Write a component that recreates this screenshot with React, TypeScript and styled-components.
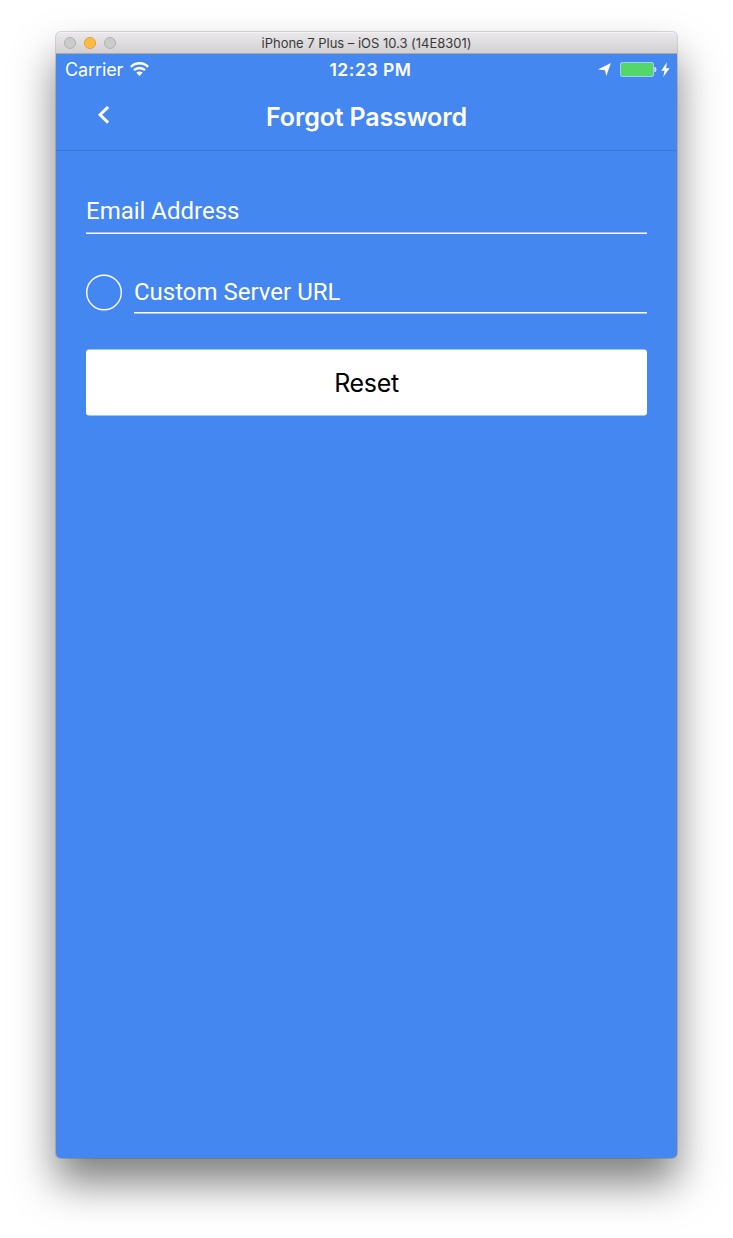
import React from 'react';
import styled, { createGlobalStyle } from 'styled-components';

const GlobalStyle = createGlobalStyle`
  *, *::before, *::after { box-sizing: border-box; }
  body { margin: 0; background: #fff; }
`;

const blue = '#4487f0';
const system = `Inter, 'Liberation Sans', sans-serif`;

const Page = styled.div`
  width: 733px;
  height: 1238px;
  padding: 32px 56px 80px;
  overflow: hidden;
  background: #fff;
`;

const Window = styled.div`
  display: flex;
  flex-direction: column;
  width: 621px;
  height: 1126px;
  border-radius: 5px;
  background: ${blue};
  color: #fff;
  font-family: ${system};
  box-shadow: 0 0 0 1px rgba(0, 0, 0, 0.14), 0 25px 42px rgba(0, 0, 0, 0.5);
`;

const TitleBar = styled.div`
  display: grid;
  grid-template-columns: 100px 1fr 100px;
  align-items: center;
  height: 22px;
  flex: none;
  border-radius: 5px 5px 0 0;
  border-bottom: 1px solid #a9a9ae;
  background: linear-gradient(#ebe9eb, #d2d0d2);
  box-shadow: inset 0 1px 0 #f4f3f4;
`;

const Lights = styled.div`
  display: flex;
  gap: 8px;
  padding-left: 8px;
`;

const Light = styled.span<{ $on?: boolean }>`
  width: 12px;
  height: 12px;
  border-radius: 50%;
  background: ${(p) => (p.$on ? '#fdbc40' : '#cdcccd')};
  border: 1px solid ${(p) => (p.$on ? '#e0a03a' : '#b3b2b3')};
`;

const WindowTitle = styled.div`
  text-align: center;
  font-size: 13px;
  line-height: 20px;
  letter-spacing: -0.02px;
  white-space: nowrap;
  color: #3a393a;
`;

const StatusBar = styled.div`
  display: grid;
  grid-template-columns: 1fr auto 1fr;
  align-items: center;
  height: 32px;
  flex: none;
  padding: 0 7px 0 9px;
`;

const Carrier = styled.div`
  display: flex;
  align-items: center;
  gap: 7px;
  font-size: 18px;
  letter-spacing: -0.1px;
  line-height: 22px;
`;

const Clock = styled.div`
  font-size: 17.5px;
  font-weight: 600;
  line-height: 22px;
  letter-spacing: 0.55px;
  padding-left: 6px;
`;

const Indicators = styled.div`
  display: flex;
  align-items: center;
  justify-content: flex-end;
`;

const Header = styled.header`
  display: grid;
  grid-template-columns: 96px 1fr 96px;
  height: 65px;
  flex: none;
  border-bottom: 1px solid #3a75d3;
`;

const BackButton = styled.button`
  display: flex;
  align-items: flex-start;
  padding: 20px 0 0 42px;
  border: 0;
  background: none;
`;

const Heading = styled.h1`
  margin: 0;
  padding-top: 15px;
  text-align: center;
  font-size: 25px;
  font-weight: 600;
  line-height: 32px;
  letter-spacing: -0.15px;
  white-space: nowrap;
`;

const Form = styled.form`
  display: flex;
  flex-direction: column;
  padding: 40px 30px 0;
`;

const Field = styled.label<{ $rule: string }>`
  flex: 1;
  display: block;
  font-family: Roboto, sans-serif;
  font-size: 24px;
  line-height: 40px;
  background: ${(p) => p.$rule} bottom / 100% 2px no-repeat;
`;

const EmailField = styled(Field)`
  flex: none;
  height: 43px;
`;

const ServerRow = styled.div`
  display: flex;
  gap: 12px;
  height: 42px;
  margin-top: 38px;
`;

const Radio = styled.span`
  width: 36px;
  height: 37px;
  margin-top: 2px;
`;

const Reset = styled.button`
  height: 67px;
  margin-top: 35px;
  padding: 1px 0 0;
  border: 0;
  border-radius: 4px;
  background: linear-gradient(#a1c3f7 1px, #fff 1px, #fff 66px, #a1c3f7 66px);
  font-family: ${system};
  font-size: 25px;
  letter-spacing: -0.35px;
  color: #000;
`;

export default function App() {
  return (
    <Page>
      <GlobalStyle />
      <Window>
        <TitleBar>
          <Lights>
            <Light />
            <Light $on />
            <Light />
          </Lights>
          <WindowTitle>iPhone 7 Plus – iOS 10.3 (14E8301)</WindowTitle>
        </TitleBar>
        <StatusBar>
          <Carrier>
            <span>Carrier</span>
            <svg width="19" height="16" viewBox="0 0 19 16" fill="none" stroke="#fff" strokeWidth="2.4">
              <path d="M0.9 4.8 A12.2 12.2 0 0 1 18.1 4.8" />
              <path d="M4 8.2 A7.8 7.8 0 0 1 15 8.2" />
              <path d="M9.5 14 L6.3 10.8 A4.6 4.6 0 0 1 12.7 10.8 Z" fill="#fff" stroke="none" />
            </svg>
          </Carrier>
          <Clock>12:23 PM</Clock>
          <Indicators>
            <svg width="72" height="16" viewBox="0 0 72 16">
              <path d="M12.9 1 L8.3 14 L7 8.2 L0 7.5 Z" fill="#fff" />
              <rect x="22.5" y="0.5" width="33" height="14" rx="1.5" fill="#53d769" stroke="#a9c9f8" />
              <path d="M56.8 5 a2.2 2.8 0 0 1 0 5 Z" fill="#d5e4fb" stroke="#d5e4fb" strokeWidth=".8" />
              <path d="M69 0.2 L63.2 8.7 H66.6 L65.2 15 L71.6 6.3 H68.1 Z" fill="#fff" />
            </svg>
          </Indicators>
        </StatusBar>
        <Header>
          <BackButton type="button" aria-label="Back">
            <svg width="12" height="18" viewBox="0 0 12 18" fill="none" stroke="#fff" strokeWidth="3">
              <path d="M10.1 1 L2.1 8.8 L10.1 16.6" />
            </svg>
          </BackButton>
          <Heading>Forgot Password</Heading>
        </Header>
        <Form>
          <EmailField $rule="linear-gradient(#a1c3f7 50%, #fff 50%)">Email Address</EmailField>
          <ServerRow>
            <Radio role="radio">
              <svg width="36" height="37" fill="none" stroke="#fff" strokeWidth="1.4">
                <circle cx="18" cy="18.5" r="17.3" />
              </svg>
            </Radio>
            <Field $rule="linear-gradient(#fff 50%, #a1c3f7 50%)">Custom Server URL</Field>
          </ServerRow>
          <Reset type="button">Reset</Reset>
        </Form>
      </Window>
    </Page>
  );
}
